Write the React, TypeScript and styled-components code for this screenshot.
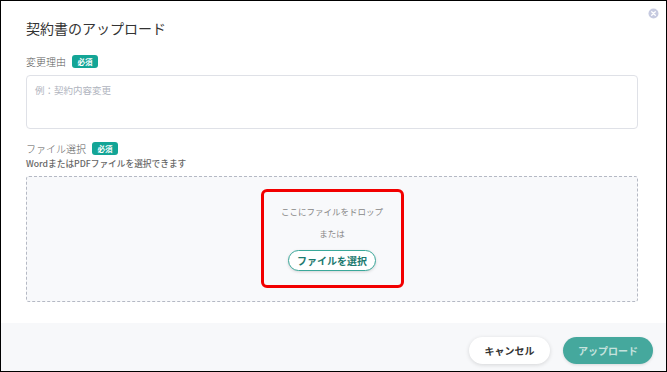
import React from "react";
import styled, { createGlobalStyle } from "styled-components";

const GlobalStyle = createGlobalStyle`
  html, body { margin: 0; padding: 0; background: #fff; }
  * { box-sizing: border-box; }
  body { font-family: "Noto Sans CJK JP", "Noto Sans", sans-serif; }
`;

const FONT = `"Noto Sans CJK JP", "Noto Sans", sans-serif`;

const Frame = styled.div`
  position: relative;
  width: 667px;
  height: 372px;
  border: 1px solid #000;
  background: #fff;
  display: flex;
  flex-direction: column;
  font-family: ${FONT};
`;

const Body = styled.div`
  padding: 17px 28px 21px 25px;
  display: flex;
  flex-direction: column;
`;

const Title = styled.h1`
  margin: 0;
  font-size: 14px;
  line-height: 20px;
  font-weight: 400;
  color: #333;
`;

const CloseButton = styled.button`
  position: absolute;
  top: 7px;
  right: 7px;
  width: 11px;
  height: 11px;
  padding: 0;
  border: 0;
  background: none;
  display: flex;
  cursor: pointer;
`;

const LabelRow = styled.div<{ $top: number }>`
  margin-top: ${(p) => p.$top}px;
  height: 13px;
  display: flex;
  align-items: center;
  gap: 6px;
`;

const Label = styled.span`
  font-size: 10px;
  line-height: 13px;
  color: #5a5a5a;
  font-weight: 300;
`;

const Badge = styled.span`
  width: 26px;
  height: 13px;
  border-radius: 3px;
  background: #13a596;
  color: #fff;
  font-size: 7.5px;
  font-weight: 700;
  display: flex;
  align-items: center;
  justify-content: center;
`;

const TextArea = styled.textarea`
  margin-top: 7px;
  height: 54px;
  width: 100%;
  resize: none;
  border: 1px solid #dfe1e7;
  border-radius: 4px;
  padding: 7px 8px;
  font-family: ${FONT};
  font-size: 9.5px;
  line-height: 14px;
  color: #333;
  outline: none;
  &::placeholder { color: #b0b4be; }
`;

const Hint = styled.p`
  margin: 3px 0 0;
  font-size: 8.7px;
  line-height: 12px;
  color: #666;
  font-weight: 500;
`;

const DropZone = styled.div`
  margin-top: 6px;
  height: 126px;
  border: 1px dashed #b5b9c4;
  border-radius: 3px;
  background: #f8f9fb;
  display: flex;
  align-items: center;
  justify-content: center;
`;

const Highlight = styled.div`
  width: 143px;
  height: 99px;
  margin-top: -2px;
  border: 3px solid #f20000;
  border-radius: 6px;
  display: flex;
  flex-direction: column;
  align-items: center;
  padding-top: 12px;
`;

const DropText = styled.span<{ $top?: number }>`
  margin-top: ${(p) => p.$top ?? 0}px;
  font-size: 8.5px;
  line-height: 14px;
  color: #888;
`;

const SelectButton = styled.button`
  margin-top: 10px;
  width: 88px;
  height: 21px;
  border-radius: 11px;
  border: 1px solid #3aa89a;
  background: #fff;
  box-shadow: 0 1px 3px rgba(0, 0, 0, 0.15);
  color: #1d7a70;
  font-family: ${FONT};
  font-size: 10px;
  font-weight: 700;
  padding: 0;
  cursor: pointer;
`;

const Footer = styled.div`
  flex: 1;
  background: #f7f8fa;
  display: flex;
  justify-content: flex-end;
  align-items: flex-start;
  gap: 13px;
  padding: 14px 13px 0 0;
`;

const FooterButton = styled.button<{ $primary?: boolean; $w: number }>`
  width: ${(p) => p.$w}px;
  height: 27px;
  border-radius: 14px;
  border: 0;
  padding: 0;
  font-family: ${FONT};
  font-size: 10px;
  font-weight: 700;
  cursor: pointer;
  background: ${(p) => (p.$primary ? "#45a89d" : "#fff")};
  color: ${(p) => (p.$primary ? "#c6e2dd" : "#333")};
  box-shadow: ${(p) => (p.$primary ? "0 1px 3px rgba(0,0,0,0.12)" : "0 1px 4px rgba(0,0,0,0.14)")};
`;

export default function App() {
  return (
    <>
      <GlobalStyle />
      <Frame>
        <CloseButton aria-label="閉じる">
          <svg width="11" height="11" viewBox="0 0 11 11">
            <circle cx="5.5" cy="5.5" r="5" fill="#c6cae0" />
            <path d="M3.7 3.7 L7.3 7.3 M7.3 3.7 L3.7 7.3" stroke="#fff" strokeWidth="1.3" strokeLinecap="round" />
          </svg>
        </CloseButton>
        <Body>
          <Title>契約書のアップロード</Title>
          <LabelRow $top={17}>
            <Label>変更理由</Label>
            <Badge>必須</Badge>
          </LabelRow>
          <TextArea placeholder="例：契約内容変更" />
          <LabelRow $top={13}>
            <Label>ファイル選択</Label>
            <Badge>必須</Badge>
          </LabelRow>
          <Hint>WordまたはPDFファイルを選択できます</Hint>
          <DropZone>
            <Highlight>
              <DropText>ここにファイルをドロップ</DropText>
              <DropText $top={8}>または</DropText>
              <SelectButton>ファイルを選択</SelectButton>
            </Highlight>
          </DropZone>
        </Body>
        <Footer>
          <FooterButton $w={81}>キャンセル</FooterButton>
          <FooterButton $w={90} $primary>アップロード</FooterButton>
        </Footer>
      </Frame>
    </>
  );
}
